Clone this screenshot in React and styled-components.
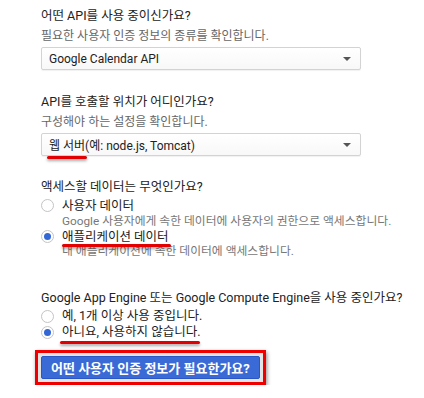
import React, { useState } from 'react'
import styled, { createGlobalStyle } from 'styled-components'

const GlobalStyle = createGlobalStyle`
    body{
        margin: 0;
        background: #fff;
        font-family: Roboto, "Noto Sans CJK KR", sans-serif;
    }
`;

const Page = styled.div`
    padding: 6px 0 0 41px;
    width: 383px;
`;

const Section = styled.div`
    margin-bottom: ${p => p.gap || 0}px;
`;

const Title = styled.div`
    font-size: 12.5px;
    line-height: 20px;
    color: #222;
    white-space: nowrap;
`;

const Hint = styled.div`
    font-size: 12px;
    line-height: 20px;
    color: #666;
`;

const Select = styled.div`
    margin-top: 1px;
    width: 320px;
    height: 23px;
    box-sizing: border-box;
    border: 1px solid #d3d3d3;
    border-radius: 2px;
    background: linear-gradient(#fff, #f8f8f8);
    box-shadow: 0 1px 1px rgba(0, 0, 0, 0.06);
    display: flex;
    align-items: center;
    justify-content: space-between;
    padding: 0 8px 0 7px;
    font-size: 12px;
    color: #222;
`;

const Arrow = styled.span`
    width: 0;
    height: 0;
    border-left: 4px solid transparent;
    border-right: 4px solid transparent;
    border-top: 4px solid #555;
    margin-right: 1px;
`;

const Option = styled.label`
    display: flex;
    align-items: center;
    gap: 7px;
    font-size: 12.5px;
    line-height: ${p => p.lh || 16}px;
    color: #222;
    cursor: pointer;
`;

const Radio = styled.span`
    width: 13px;
    height: 13px;
    box-sizing: border-box;
    border-radius: 50%;
    border: 1px solid #c4c4c4;
    background: #fff;
    display: flex;
    align-items: center;
    justify-content: center;
    flex-shrink: 0;
    margin-right: 1px;
    &::after{
        content: '';
        width: 7px;
        height: 7px;
        border-radius: 50%;
        background: ${p => p.checked ? '#3367d6' : 'transparent'};
    }
`;

const Desc = styled.div`
    padding-left: 21px;
    font-size: 11.8px;
    line-height: 15px;
    color: #777;
    white-space: nowrap;
`;

// hand drawn red highlight under a phrase
const Marked = styled.span`
    position: relative;
    &::after{
        content: '';
        position: absolute;
        left: ${p => p.l || 0}px;
        right: ${p => p.r || 0}px;
        bottom: ${p => p.b || -4}px;
        height: 3px;
        border-radius: 2px;
        background: #e30000;
        box-shadow: 0 2px 3px rgba(0, 0, 0, 0.35);
    }
`;

const RedBox = styled.div`
    display: inline-block;
    margin: 10px 0 0 -6px;
    padding: 3px;
    border: 3px solid #ee0000;
    background: #e4e4e4;
    box-shadow: 1px 2px 4px rgba(0, 0, 0, 0.45);
`;

const Button = styled.button`
    display: block;
    height: 23px;
    padding: 0 9px;
    border: 1px solid #2a56c6;
    border-radius: 2px;
    background: #3a6ad6;
    color: #fff;
    font-family: Roboto, "Noto Sans CJK KR", sans-serif;
    font-size: 13px;
    font-weight: 700;
    cursor: pointer;
`;

function App() {
    const [data, setData] = useState('app');
    const [engine, setEngine] = useState('no');

    return (
        <Page>
            <GlobalStyle />
            <Section gap={22}>
                <Title>어떤 API를 사용 중이신가요?</Title>
                <Hint>필요한 사용자 인증 정보의 종류를 확인합니다.</Hint>
                <Select>
                    <span>Google Calendar API</span>
                    <Arrow />
                </Select>
            </Section>
            <Section gap={21}>
                <Title>API를 호출할 위치가 어디인가요?</Title>
                <Hint>구성해야 하는 설정을 확인합니다.</Hint>
                <Select>
                    <span><Marked l={-2} r={-2} b={-6}>웹 서버</Marked>(예: node.js, Tomcat)</span>
                    <Arrow />
                </Select>
            </Section>
            <Section gap={29}>
                <Title>액세스할 데이터는 무엇인가요?</Title>
                <Option lh={17} onClick={() => setData('user')}>
                    <Radio checked={data === 'user'} />
                    사용자 데이터
                </Option>
                <Desc>Google 사용자에게 속한 데이터에 사용자의 권한으로 액세스합니다.</Desc>
                <Option lh={15} onClick={() => setData('app')}>
                    <Radio checked={data === 'app'} />
                    <Marked r={-2} b={-3}>애플리케이션 데이터</Marked>
                </Option>
                <Desc>내 애플리케이션에 속한 데이터에 액세스합니다.</Desc>
            </Section>
            <Section>
                <Title>Google App Engine 또는 Google Compute Engine을 사용 중인가요?</Title>
                <Option onClick={() => setEngine('yes')}>
                    <Radio checked={engine === 'yes'} />
                    예, 1개 이상 사용 중입니다.
                </Option>
                <Option onClick={() => setEngine('no')}>
                    <Radio checked={engine === 'no'} />
                    <Marked l={-2} b={-4}>아니요, 사용하지 않습니다.</Marked>
                </Option>
                <RedBox>
                    <Button>어떤 사용자 인증 정보가 필요한가요?</Button>
                </RedBox>
            </Section>
        </Page>
    );
}

export default App;
